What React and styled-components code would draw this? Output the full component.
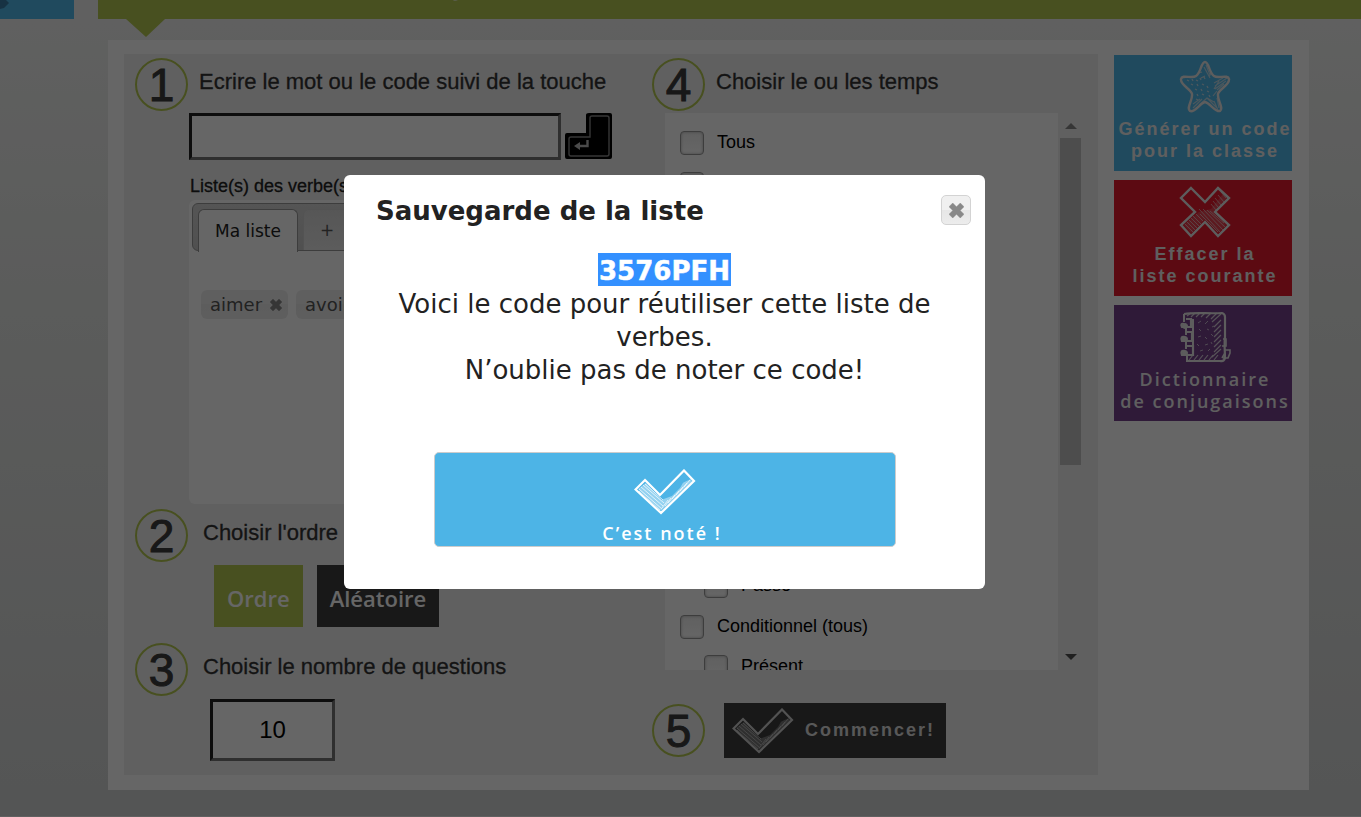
import React from "react";
import styled, { createGlobalStyle } from "styled-components";

const GlobalStyle = createGlobalStyle`
  *, *::before, *::after { box-sizing: border-box; }
  body {
    margin: 0;
    color: #222;
    background: linear-gradient(#f0f1f0, #e4e6e4 35%, #d2d4d4);
    font-family: "Liberation Sans", Arial, sans-serif;
  }
  button, input { font: inherit; margin: 0; }
`;

const sans = `"Liberation Sans", Arial, sans-serif`;
const verdana = `"DejaVu Sans", Verdana, sans-serif`;
const rounded = `"Open Sans", "Noto Sans", sans-serif`;

const Page = styled.div`
  padding-bottom: 26px;
`;

const TopBar = styled.header`
  display: flex;
  gap: 24px;
  height: 40px;
`;

const HomeTab = styled.a`
  display: block;
  width: 74px;
  height: 19px;
  background: #50b9eb;
`;

const Banner = styled.div`
  flex: 1;
`;

const BannerStrip = styled.div`
  height: 19px;
  padding-left: 354px;
  background: #b4c850;
`;

const Block = styled.svg`
  display: block;
`;

const Pointer = styled(Block)`
  margin-left: 28px;
`;

const Card = styled.main`
  display: grid;
  grid-template-columns: minmax(0, 1fr) 178px;
  gap: 16px;
  margin: 0 52px 0 108px;
  padding: 14px 17px 15px 16px;
  background: #fff;
`;

const Panel = styled.section`
  display: grid;
  grid-template-columns: 528fr 446fr;
  padding: 4px 0 14px;
  background: #f0f0f0;
`;

const LeftColumn = styled.div`
  padding-left: 11px;
`;

const RightColumn = styled.div`
  padding-right: 15px;
`;

const StepHead = styled.div`
  display: flex;
  gap: 11px;
  margin-top: ${(p) => p.$top || 0}px;
`;

const Circle = styled.span`
  flex: none;
  width: 53px;
  height: 53px;
  border: 2px solid #b4c850;
  border-radius: 50%;
  font-size: 46px;
  line-height: 50px;
  text-align: center;
  color: #3c3c3c;
  -webkit-text-stroke: 1px #3c3c3c;
`;

const StepTitle = styled.label`
  margin: 0;
  padding-left: ${(p) => p.$indent || 0}px;
  font-size: 22px;
  font-weight: 400;
  line-height: 48px;
  color: #333;
  white-space: nowrap;
  -webkit-text-stroke: 0.3px #333;
`;

const EntryRow = styled.div`
  display: flex;
  gap: 3px;
  margin: 2px 39px 0 54px;
`;

const Field = styled.input`
  border: 3px solid;
  border-color: #222 #757575 #757575 #222;
  border-radius: 0;
  background: #fff;
  color: #000;
  outline: 0;
`;

const WordInput = styled(Field)`
  flex: 1;
  min-width: 0;
  height: 47px;
  padding: 0 8px;
  font-size: 24px;
`;

const CountInput = styled(Field)`
  display: block;
  width: 125px;
  height: 62px;
  margin: 3px 0 0 75px;
  padding: 0;
  font-size: 24px;
  text-align: center;
`;

const EnterButton = styled.button`
  padding: 0;
  border: 0;
  background: none;
`;

const ListLabel = styled.h2`
  margin: 17px 0 5px 55px;
  font-size: 18px;
  line-height: 18px;
  font-weight: 400;
  color: #222;
  -webkit-text-stroke: 0.3px #222;
`;

const VerbBox = styled.div`
  height: 304px;
  margin: 0 35px 0 54px;
  padding: 3px;
  border-radius: 6px;
  background: #fff;
  font-family: ${verdana};
`;

const TabStrip = styled.div`
  display: flex;
  gap: 5px;
  height: 48px;
  padding: 5px 5px 0;
  border: 1px solid #999;
  border-radius: 6px;
  background: linear-gradient(#d4d4d4, #c8c8c8);
`;

const Tab = styled.button`
  height: ${(p) => (p.$active ? 43 : 41)}px;
  padding: 0 16px;
  border: 1px solid ${(p) => (p.$active ? "#999" : "#d0d0d0")};
  border-bottom: 0;
  border-radius: 6px 6px 0 0;
  background: ${(p) => (p.$active ? "#fff" : "linear-gradient(#d8d8d8, #e6e6e6)")};
  color: ${(p) => (p.$active ? "#212121" : "#555")};
  font-size: 17px;
`;

const Chips = styled.div`
  display: flex;
  gap: 8px;
  padding: 39px 9px 0;
`;

const Chip = styled.span`
  display: flex;
  align-items: center;
  gap: 8px;
  height: 29px;
  padding: 0 6px 0 9px;
  border-radius: 6px;
  background: linear-gradient(#eee 50%, #e8e8e8 50%, #ececec);
  font-size: 18px;
  color: #555;
`;

const PlainButton = styled.button`
  display: flex;
  padding: 0;
  border: 0;
  background: none;
`;

const OrderRow = styled.div`
  display: flex;
  gap: 14px;
  margin: 3px 0 0 79px;
`;

const OrderButton = styled.button`
  height: 62px;
  padding: 4px 13px 0;
  border: 0;
  background: ${(p) => (p.$on ? "#b4c850" : "#3c3c3c")};
  color: #fff;
  font-family: ${rounded};
  font-weight: 600;
  font-size: 22px;
`;

const TenseArea = styled.div`
  display: flex;
  height: 557px;
  margin: 2px 0 0 13px;
`;

const TenseList = styled.div`
  flex: 1;
  overflow: hidden;
  padding: 9px 15px;
  background: #fff;
`;

const TenseGroup = styled.div`
  margin-bottom: 1px;
`;

const TenseRow = styled.label`
  display: flex;
  align-items: center;
  gap: 13px;
  height: 40px;
  padding: 2px 0 0 ${(p) => (p.$child ? 24 : 0)}px;
  font-size: 18px;
  color: #000;
`;

const RowText = styled.span`
  padding-bottom: 2px;
`;

const Check = styled.input`
  appearance: none;
  width: 24px;
  height: 24px;
  border: 1px solid #999;
  border-radius: 4px;
  background: linear-gradient(#f0f0f0, #fff);
  box-shadow: inset 0 0 3px #aaa;
`;

const ScrollTrack = styled.div`
  display: flex;
  flex-direction: column;
  align-items: center;
  width: 25px;
  padding: 10px 0;
`;

const Thumb = styled.div`
  width: 21px;
  height: 327px;
  margin: 9px 0 auto;
  background: #c1c1c1;
`;

const StartRow = styled.div`
  display: flex;
  gap: 19px;
  align-items: center;
  margin-top: 33px;
`;

const StartButton = styled.button`
  display: flex;
  align-items: center;
  gap: 11px;
  height: 55px;
  padding: 0 11px 0 8px;
  border: 0;
  background: #3c3c3c;
  color: #ddd;
  font-family: ${sans};
  font-weight: 700;
  font-size: 18px;
  letter-spacing: 2px;
`;

const Side = styled.aside`
  display: flex;
  flex-direction: column;
  gap: 9px;
  padding-top: 1px;
`;

const SideButton = styled.button`
  display: flex;
  flex-direction: column;
  align-items: center;
  height: 116px;
  padding: 5px 0 0 4px;
  border: 0;
  background: ${(p) => p.$color};
  color: #eee;
  font-family: ${(p) => (p.$round ? rounded : sans)};
  font-weight: ${(p) => (p.$round ? 600 : 700)};
  font-size: 18px;
  line-height: 22px;
  letter-spacing: 2px;
  white-space: nowrap;
`;

const SideText = styled.span`
  padding-top: 5px;
`;

const Overlay = styled.div`
  position: fixed;
  inset: 0;
  display: flex;
  justify-content: center;
  align-items: flex-start;
  padding: 175px 32px 0 0;
  background: rgba(0, 0, 0, 0.6);
`;

const Dialog = styled.section`
  width: 641px;
  max-width: 100%;
  padding: 20px 14px 42px 32px;
  border-radius: 6px;
  background: #fff;
  font-family: ${verdana};
  font-size: 26px;
  color: #222;
`;

const DialogHead = styled.header`
  display: flex;
  justify-content: space-between;
  height: 30px;
`;

const DialogTitle = styled.h1`
  margin: 0;
  font-size: 26px;
  line-height: 32px;
`;

const CloseButton = styled.button`
  display: flex;
  align-items: center;
  justify-content: center;
  width: 30px;
  height: 30px;
  padding: 0;
  border: 1px solid #d3d3d3;
  border-radius: 5px;
  background: linear-gradient(#f0f0f0 50%, #e6e6e6 50%, #ececec);
`;

const Message = styled.div`
  margin: 28px 18px 65px 0;
  line-height: 33px;
  text-align: center;
`;

const Code = styled.strong`
  display: block;
  width: fit-content;
  margin: 0 auto 2px;
  padding: 3px 1px 0;
  line-height: 30px;
  background: #3390ff;
  color: #fff;
  -webkit-text-stroke: 0.5px #fff;
`;

const ConfirmButton = styled.button`
  display: flex;
  flex-direction: column;
  align-items: center;
  width: 462px;
  height: 95px;
  margin: 0 0 0 58px;
  padding: 16px 0 0;
  border: 1px solid #ccc;
  border-radius: 5px;
  background: #4db4e6;
  color: #fff;
  font-family: ${rounded};
  font-weight: 600;
  font-size: 18px;
  line-height: 22px;
  letter-spacing: 2px;
`;

const ConfirmText = styled.span`
  padding: 7px 6px 0 0;
`;

function CrossIcon({ size, color }) {
  return (
    <svg width={size} height={size} viewBox="0 0 14 14" aria-hidden="true">
      <path
        d="M3.5 0 7 3.5 10.5 0 14 3.5 10.5 7 14 10.5 10.5 14 7 10.5 3.5 14 0 10.5 3.5 7 0 3.5Z"
        fill={color}
        stroke={color}
        strokeWidth=".4"
        strokeLinejoin="round"
      />
    </svg>
  );
}

function TickIcon({ color, fill }) {
  return (
    <svg width="62" height="46" viewBox="0 0 62 46" fill="none" stroke={color} aria-hidden="true">
      <path d="M4 20 12 14 27 30 44 16 57 10 58 13 27 42Z" fill={color} stroke="none" opacity=".4" />
      <path d="M27 26 50 3 56 8 50 12 46 19 38 27 27 31Z" fill={fill} stroke="none" />
      <path d="M11 11 26 26 50 1.500 60 12 27 44 1.500 20.500Z" strokeWidth="2.200" />
      <path
        d="M5 20 28 40M7 18 29 37M9 16 30 34M11 15 29 31M5 22 26 41M28 39 34 31M31 37 37 29M34 34 41 26M38 30 45 22M42 26 49 18M46 22 53 14M50 18 56 11"
        strokeWidth="1"
        opacity=".7"
      />
    </svg>
  );
}

function StarIcon() {
  return (
    <svg width="52" height="53" viewBox="0 0 52 53" fill="none" stroke="#e8e8e8" aria-hidden="true">
      <path
        d="M26 2C30 2 30 13 35 16 39 19 49 14 50 19 51 25 40 29 39 34 38 40 45 48 41 51 37 53 31 43 26 42 21 43 16 53 11 51 7 48 14 40 13 34 12 29 1 25 2 19 3 14 13 19 17 16 22 13 22 2 26 2Z"
        strokeWidth="2.400"
      />
      <path
        d="m27 5 4 10M25 7l6 11M30 17l2-4M48 18 36 26M47 21 36 29M44 18 35 23M45 24 38 30M40 21l-5 8M38 38l2 10M35 41l4 9M32 42l6 6M14 48l9-9M14 44l7-5M20 45l8-7 7 4M28 38l6 6M38 31l-4 5"
        strokeWidth="1.200"
        opacity=".7"
      />
      <path
        d="m8 20 2 1m3-2 1 2m3-1 2 1m2-3 1 2m3-3 1 2M12 24l2 1m4-1 1 2m4-2 2 1m3 1 1 2M16 29l2 1m4-1 1 2m5 0 2 1M18 34l1 2m4-2 2 1m5 0 1 2M20 13l3-1m-1 6 4-2m-9 23 2 1"
        strokeWidth="1.300"
        opacity=".75"
      />
    </svg>
  );
}

function EraseIcon() {
  return (
    <svg width="52" height="53" viewBox="0 0 52 53" fill="none" stroke="#e8e8e8" aria-hidden="true">
      <path d="M12 3 26 17 39 3 50 13 36 27 50 40 39 51 26 37 12 51 2 40 16 27 2 13Z" strokeWidth="2.400" />
      <path d="M5 40 20 27 32 24 44 9 48 13 34 27 47 40 39 48 26 34 12 48Z" fill="#e8e8e8" stroke="none" opacity=".2" />
      <path
        d="M6 39l9 9M8 37l9 9M10 35l9 9M12 33l9 9M14 31l8 8M17 29l7 7M42 7l5 6M39 10l6 7M36 13l6 7M34 16l5 6M32 19l5 6M20 24l21 23M24 24l20 21M28 25l18 17M21 29l18 18M31 26l14 12"
        strokeWidth="1"
        opacity=".6"
      />
    </svg>
  );
}

function BookIcon() {
  return (
    <svg width="52" height="53" viewBox="0 0 52 53" fill="none" stroke="#e8e8e8" aria-hidden="true">
      <path d="M5 4c12-2 25 0 38-1q3 1 3 4v20c-1 7 0 14 0 21q-1 4-5 3H7" strokeWidth="2.200" />
      <path d="M5 4v8M7 18v7M7 31v8M8 45v6M14 9v37" strokeWidth="2" />
      <path d="M5 14q-4-1-2 3h9V9H7M6 27q-5-1-3 4h10V22H8M6 41q-5-1-3 4h11v-9H8" strokeWidth="2.200" />
      <circle cx="6" cy="16" r="2.500" fill="#e8e8e8" />
      <circle cx="6" cy="29" r="2.500" fill="#e8e8e8" />
      <circle cx="6" cy="43" r="2.500" fill="#e8e8e8" />
      <path d="M44 29h3v7h-4M45 40h6v3l-2 5h-5M46 43l-3 5" strokeWidth="1.600" />
      <path
        d="m8 6 4-3m0 4 4-4m1 4 4-4m1 4 4-4m1 5 5-5m0 6 6-6m-5 9 9-8m-7 13 7-7m-7 12 7-7m-7 12 7-7m-7 12 7-7m-7 12 7-7m-7 12 7-7m-9 12 9-8M20 50l4-5m1 5 4-5m1 5 4-5m1 5 4-5M15 50l4-5m-9 5 4-5"
        strokeWidth="1.200"
        opacity=".85"
      />
      <path
        d="m19 13 3-2m4 3 3-3m-9 8 2 2m6-2 2 1m3-3 2-1M19 27l3-1m4 1 2 2m4-5 2 2M18 34l2 2m6-1 3-1m3-2 1 2M21 41l3-1m5 1 2-2"
        strokeWidth="1"
        opacity=".7"
      />
    </svg>
  );
}

function EnterKey() {
  return (
    <Block width="49" height="47" viewBox="0 0 49 47" aria-hidden="true">
      <path d="M25 0h21q2 0 2 2v42q0 2-2 2H3q-2 0-2-2V22q0-2 2-2h19V2q0-2 3-2Z" fill="#000" />
      <path d="M28 3h15q2 0 2 2v36q0 2-2 2H7q-2 0-2-2V26q0-2 2-2h19V5q0-2 2-2Z" fill="none" stroke="#888" strokeWidth="1.400" />
      <path d="M23.500 27v6H13" fill="none" stroke="#bbb" strokeWidth="2.400" />
      <path d="m10 33 6-4v8Z" fill="#bbb" />
    </Block>
  );
}

const tenses = [
  ["Tous"],
  ["Indicatif (tous)", "Présent", "Imparfait", "Passé simple", "Futur simple"],
  ["Impératif (tous)", "Présent"],
  ["Subjonctif (tous)", "Présent", "Imparfait", "Passé"],
  ["Conditionnel (tous)", "Présent"],
];

function Tense({ name, child }) {
  return (
    <TenseRow $child={child}>
      <Check type="checkbox" />
      <RowText>{name}</RowText>
    </TenseRow>
  );
}

function Verb({ name }) {
  return (
    <Chip>
      {name}
      <PlainButton aria-label={`Retirer ${name}`}>
        <CrossIcon size={12} color="#888" />
      </PlainButton>
    </Chip>
  );
}

export default function App() {
  return (
    <>
      <GlobalStyle />
      <Page>
        <TopBar>
          <HomeTab href="#" aria-label="Accueil">
            <Block width="12" height="12" viewBox="0 0 12 12">
              <path d="M0 0h6l3 3-5 5-4 1Z" fill="#3a7ea8" />
            </Block>
          </HomeTab>
          <Banner>
            <BannerStrip>
              <Block width="8" height="2" viewBox="0 0 8 2">
                <path d="M1 0h5L4 1H2Z" fill="#dde5b0" />
              </Block>
            </BannerStrip>
            <Pointer width="39" height="18" viewBox="0 0 39 18">
              <path d="M0 0h39L20 18Z" fill="#b4c850" />
            </Pointer>
          </Banner>
        </TopBar>
        <Card>
          <Panel>
            <LeftColumn>
              <StepHead>
                <Circle>1</Circle>
                <StepTitle htmlFor="mot">Ecrire le mot ou le code suivi de la touche</StepTitle>
              </StepHead>
              <EntryRow>
                <WordInput id="mot" type="text" />
                <EnterButton aria-label="Entrée">
                  <EnterKey />
                </EnterButton>
              </EntryRow>
              <ListLabel>Liste(s) des verbe(s)</ListLabel>
              <VerbBox>
                <TabStrip>
                  <Tab $active>Ma liste</Tab>
                  <Tab>+</Tab>
                </TabStrip>
                <Chips>
                  <Verb name="aimer" />
                  <Verb name="avoir" />
                </Chips>
              </VerbBox>
              <StepHead $top={5}>
                <Circle>2</Circle>
                <StepTitle as="h2" $indent={4}>Choisir l'ordre</StepTitle>
              </StepHead>
              <OrderRow>
                <OrderButton $on>Ordre</OrderButton>
                <OrderButton>Aléatoire</OrderButton>
              </OrderRow>
              <StepHead $top={16}>
                <Circle>3</Circle>
                <StepTitle htmlFor="nombre" $indent={4}>Choisir le nombre de questions</StepTitle>
              </StepHead>
              <CountInput id="nombre" type="text" defaultValue="10" />
            </LeftColumn>
            <RightColumn>
              <StepHead>
                <Circle>4</Circle>
                <StepTitle as="h2">Choisir le ou les temps</StepTitle>
              </StepHead>
              <TenseArea>
                <TenseList>
                  {tenses.map(([head, ...rest]) => (
                    <TenseGroup key={head}>
                      <Tense name={head} />
                      {rest.map((t) => (
                        <Tense key={t} name={t} child />
                      ))}
                    </TenseGroup>
                  ))}
                </TenseList>
                <ScrollTrack>
                  <Block width="12" height="6" viewBox="0 0 12 6">
                    <path d="M0 6 6 0l6 6Z" fill="#888" />
                  </Block>
                  <Thumb />
                  <Block width="12" height="6" viewBox="0 0 12 6">
                    <path d="M0 0h12L6 6Z" fill="#505050" />
                  </Block>
                </ScrollTrack>
              </TenseArea>
              <StartRow>
                <Circle>5</Circle>
                <StartButton>
                  <TickIcon color="#ccc" fill="#3c3c3c" />
                  Commencer!
                </StartButton>
              </StartRow>
            </RightColumn>
          </Panel>
          <Side>
            <SideButton $color="#50b9eb">
              <StarIcon />
              <SideText>Générer un code<br />pour la classe</SideText>
            </SideButton>
            <SideButton $color="#e6192d">
              <EraseIcon />
              <SideText>Effacer la<br />liste courante</SideText>
            </SideButton>
            <SideButton $color="#75418c" $round>
              <BookIcon />
              <SideText>Dictionnaire<br />de conjugaisons</SideText>
            </SideButton>
          </Side>
        </Card>
      </Page>
      <Overlay>
        <Dialog role="dialog" aria-modal="true" aria-labelledby="titre">
          <DialogHead>
            <DialogTitle id="titre">Sauvegarde de la liste</DialogTitle>
            <CloseButton aria-label="Fermer">
              <CrossIcon size={15} color="#888" />
            </CloseButton>
          </DialogHead>
          <Message>
            <Code>3576PFH</Code>
            Voici le code pour réutiliser cette liste de verbes.
            <br />
            N’oublie pas de noter ce code!
          </Message>
          <ConfirmButton>
            <TickIcon color="#fff" fill="#4db4e6" />
            <ConfirmText>C’est noté !</ConfirmText>
          </ConfirmButton>
        </Dialog>
      </Overlay>
    </>
  );
}
